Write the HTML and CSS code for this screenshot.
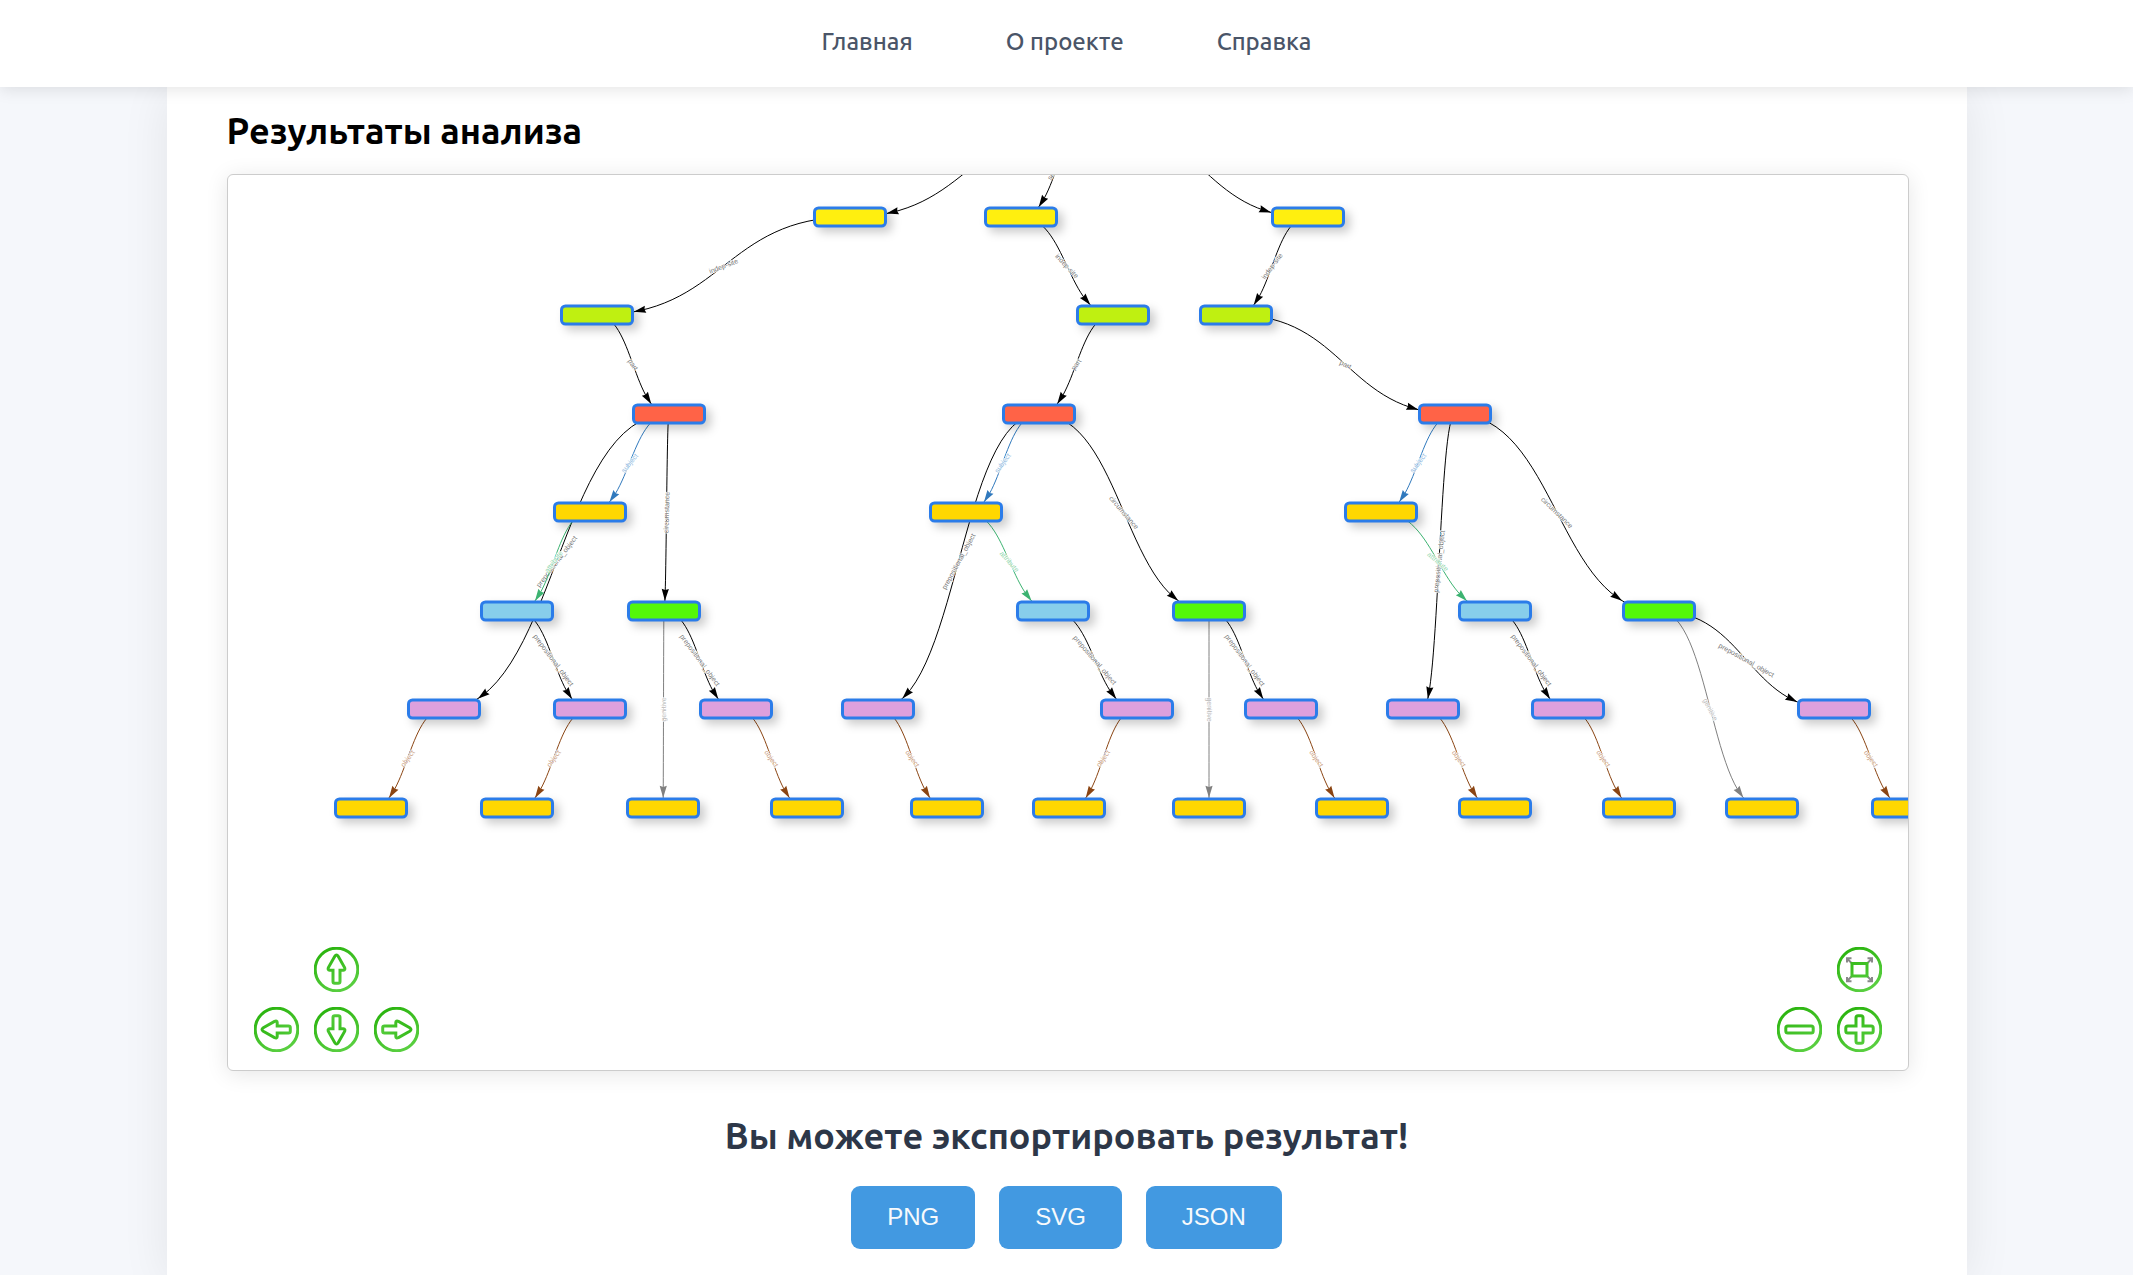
FILE: index.html
```html
<!DOCTYPE html>
<html lang="ru">
<head>
<meta charset="utf-8">
<title>Результаты анализа</title>
<link rel="stylesheet" href="styles.css">
</head>
<body>
<header class="header">
  <nav class="nav">
    <a class="nav-link" href="#">Главная</a>
    <a class="nav-link" href="#">О проекте</a>
    <a class="nav-link" href="#">Справка</a>
  </nav>
</header>
<main class="container">
  <h2 class="title">Результаты анализа</h2>
  <div class="network">
    <svg class="network-canvas" id="network" role="img" aria-label="Граф разбора"></svg>
    <svg class="defs" aria-hidden="true">
      <defs>
        <linearGradient id="green" gradientUnits="userSpaceOnUse" x1="8" y1="0" x2="30" y2="45">
          <stop offset="0" stop-color="#27b20b"/><stop offset="1" stop-color="#5bd042"/>
        </linearGradient>
        <symbol id="arrow" viewBox="0 0 45 45">
          <path d="M20.8 9.300 Q22.500 6.700 24.200 9.300 L30.600 20.500 Q31.500 23.200 29.500 23.200 H26 V34.500 Q26 36.300 24.200 36.300 H20.800 Q19 36.300 19 34.500 V23.200 H15.500 Q13.500 23.200 14.400 20.500Z"/>
        </symbol>
      </defs>
    </svg>
    <div class="controls controls-move">
      <button class="control control-up" aria-label="Вверх"><svg class="icon" viewBox="0 0 45 45"><circle cx="22.500" cy="22.500" r="21.300"/><use href="#arrow" width="45" height="45"/></svg></button>
      <button class="control control-left" aria-label="Влево"><svg class="icon" viewBox="0 0 45 45"><circle cx="22.500" cy="22.500" r="21.300"/><use href="#arrow" width="45" height="45" transform="rotate(-90 22.500 22.500)"/></svg></button>
      <button class="control control-down" aria-label="Вниз"><svg class="icon" viewBox="0 0 45 45"><circle cx="22.500" cy="22.500" r="21.300"/><use href="#arrow" width="45" height="45" transform="rotate(180 22.500 22.500)"/></svg></button>
      <button class="control control-right" aria-label="Вправо"><svg class="icon" viewBox="0 0 45 45"><circle cx="22.500" cy="22.500" r="21.300"/><use href="#arrow" width="45" height="45" transform="rotate(90 22.500 22.500)"/></svg></button>
    </div>
    <div class="controls controls-zoom">
      <button class="control control-fit" aria-label="Показать всё"><svg class="icon" viewBox="0 0 45 45"><circle cx="22.500" cy="22.500" r="21.300"/><path class="icon-gray" d="M14.500 16 10 11.500M10 15.500V11.200H14.500M30.500 16 35 11.500M30.500 11.200H35V15.500M14.500 29.500 10 34M10 30V34.300H14.500M30.500 29.500 35 34M30.500 34.300H35V30"/><path class="icon-frame" d="M15 16.500H30V29H15Z"/></svg></button>
      <button class="control control-out" aria-label="Уменьшить"><svg class="icon" viewBox="0 0 45 45"><circle cx="22.500" cy="22.500" r="21.300"/><rect x="8.800" y="19" width="27.400" height="7" rx="2"/></svg></button>
      <button class="control control-in" aria-label="Увеличить"><svg class="icon" viewBox="0 0 45 45"><circle cx="22.500" cy="22.500" r="21.300"/><path d="M19 19V10.800Q19 8.800 21 8.800H24Q26 8.800 26 10.800V19H34.200Q36.200 19 36.200 21V24Q36.200 26 34.200 26H26V34.200Q26 36.200 24 36.200H21Q19 36.200 19 34.200V26H10.800Q8.800 26 8.800 24V21Q8.800 19 10.800 19Z"/></svg></button>
    </div>
  </div>
  <section class="export">
    <h2 class="export-title">Вы можете экспортировать результат!</h2>
    <div class="export-buttons">
      <button class="button">PNG</button>
      <button class="button">SVG</button>
      <button class="button">JSON</button>
    </div>
  </section>
</main>
<script src="network.js"></script>
</body>
</html>
```
FILE: styles.css
```css
body {
  margin: 0;
  background: #f5f7fb;
  font-family: Ubuntu, "Noto Sans", sans-serif;
  color: #000;
}

.header {
  position: sticky;
  top: 0;
  z-index: 2;
  height: 87px;
  box-sizing: border-box;
  padding-bottom: 3px;
  display: flex;
  align-items: center;
  justify-content: center;
  background: #fff;
  box-shadow: 0 3px 15px rgba(0, 0, 0, 0.1);
}

.nav {
  display: flex;
  gap: 93px;
}

.nav-link {
  font-size: 24px;
  font-weight: 500;
  line-height: 32px;
  color: #4a5568;
  text-decoration: none;
}

.container {
  max-width: 1682px;
  margin: 0 auto;
  padding: 20px 58px 26px 60px;
  background: #fff;
  box-shadow: 0 6px 45px rgba(0, 0, 0, 0.08);
}

.title {
  margin: 0 0 19px;
  font-size: 36px;
  font-weight: 600;
  line-height: 48px;
}

.network {
  position: relative;
  height: 895px;
  border: 1px solid #ccc;
  border-radius: 6px;
  overflow: hidden;
  background: #fff;
  box-shadow: 0 3px 22px rgba(0, 0, 0, 0.1);
}

.network-canvas {
  display: block;
  width: 100%;
  height: 100%;
}

.defs {
  position: absolute;
  width: 0;
  height: 0;
}

.node {
  stroke: #2b7ce9;
  stroke-width: 3px;
  filter: drop-shadow(5px 5px 5px rgba(0, 0, 0, 0.2));
}

.edge {
  fill: none;
  stroke-width: 1px;
}

.edge-label {
  font-family: Arial, "Liberation Sans", sans-serif;
  font-size: 7px;
  text-anchor: middle;
  dominant-baseline: central;
  stroke: #fff;
  stroke-width: 1px;
  paint-order: stroke;
}

.controls {
  position: absolute;
  bottom: 18px;
  display: grid;
  gap: 15px;
}

.controls-move {
  left: 26px;
  grid-template-areas: ". up ." "left down right";
}

.controls-zoom {
  right: 26px;
  grid-template-areas: ". fit" "out in";
}

.control {
  width: 45px;
  height: 45px;
  padding: 0;
  border: 0;
  background: none;
  cursor: pointer;
}

.control-up { grid-area: up; }
.control-left { grid-area: left; }
.control-down { grid-area: down; }
.control-right { grid-area: right; }
.control-fit { grid-area: fit; }
.control-out { grid-area: out; }
.control-in { grid-area: in; }

.icon {
  display: block;
  width: 45px;
  height: 45px;
  fill: none;
  stroke: url(#green);
  stroke-width: 3px;
}

.icon-gray {
  stroke: #888;
  stroke-width: 2px;
}

.icon-frame {
  stroke-width: 3px;
}

.export {
  display: flex;
  flex-direction: column;
  align-items: center;
  gap: 26px;
  padding: 41px 2px 0 0;
}

.export-title {
  margin: 0;
  font-size: 36px;
  font-weight: 600;
  line-height: 48px;
  color: #2d3748;
}

.export-buttons {
  display: flex;
  gap: 24px;
}

.button {
  padding: 0 36px 1px;
  border: 0;
  border-radius: 9px;
  background: #4299e1;
  color: #f7fafc;
  font-family: Arial, "Liberation Sans", sans-serif;
  font-size: 24px;
  line-height: 62px;
  cursor: pointer;
}
```
FILE: network.js
```js
// Syntax graph: nodes sit on fixed levels, edges are horizontal cubic curves.
const SVG = "http://www.w3.org/2000/svg";
const canvas = document.getElementById("network");
const levels = [-57, 42, 140, 239, 337, 436, 534, 633];
const nodeSize = { w: 71, h: 18 };

const types = {
  root: "#ffef0f", sentence: "#ffef0f", clause: "#bff011", verb: "#ff6347",
  noun: "#ffd700", adjective: "#87ceeb", adverb: "#54f70a", prep: "#dda0dd"
};

// id: [x, level, type]
const nodes = {
  r: [865, 0, "root"],
  s1: [622, 1, "sentence"], s2: [793, 1, "sentence"], s3: [1080, 1, "sentence"],
  c1: [369, 2, "clause"], c2: [885, 2, "clause"], c3: [1008, 2, "clause"],
  v1: [441, 3, "verb"], v2: [811, 3, "verb"], v3: [1227, 3, "verb"],
  n1: [362, 4, "noun"], n2: [738, 4, "noun"], n3: [1153, 4, "noun"],
  a1: [289, 5, "adjective"], d1: [436, 5, "adverb"], a2: [825, 5, "adjective"],
  d2: [981, 5, "adverb"], a3: [1267, 5, "adjective"], d3: [1431, 5, "adverb"],
  p1: [216, 6, "prep"], p2: [362, 6, "prep"], p3: [508, 6, "prep"],
  p4: [650, 6, "prep"], p5: [909, 6, "prep"], p6: [1053, 6, "prep"],
  p7: [1195, 6, "prep"], p8: [1340, 6, "prep"], p9: [1606, 6, "prep"],
  o1: [143, 7, "noun"], o2: [289, 7, "noun"], o3: [435, 7, "noun"], o4: [579, 7, "noun"],
  o5: [719, 7, "noun"], o6: [841, 7, "noun"], o7: [981, 7, "noun"], o8: [1124, 7, "noun"],
  o9: [1267, 7, "noun"], o10: [1411, 7, "noun"], o11: [1534, 7, "noun"], o12: [1680, 7, "noun"]
};

const relations = {
  "": ["#000", "#777"], sentence: ["#000", "#777"], "indep-site": ["#000", "#777"], part: ["#000", "#777"],
  circumstance: ["#000", "#777"], prepositional_object: ["#000", "#777"],
  subject: ["#3079bd", "#8db8e0"], attribute: ["#3cb371", "#8fd6ad"],
  object: ["#8b4513", "#c99d80"], genitive: ["#808080", "#bbb"]
};

const edges = [
  ["r", "s1", ""], ["r", "s2", "sentence"], ["r", "s3", ""],
  ["s1", "c1", "indep-site"], ["s2", "c2", "indep-site"], ["s3", "c3", "indep-site"],
  ["c1", "v1", "part"], ["c2", "v2", "part"], ["c3", "v3", "part"],
  ["v1", "p1", "prepositional_object"], ["v2", "p4", "prepositional_object"], ["v3", "p7", "prepositional_object"],
  ["v1", "n1", "subject"], ["v2", "n2", "subject"], ["v3", "n3", "subject"],
  ["v1", "d1", "circumstance"], ["v2", "d2", "circumstance"], ["v3", "d3", "circumstance"],
  ["n1", "a1", "attribute"], ["n2", "a2", "attribute"], ["n3", "a3", "attribute"],
  ["a1", "p2", "prepositional_object"], ["a2", "p5", "prepositional_object"], ["a3", "p8", "prepositional_object"],
  ["d1", "p3", "prepositional_object"], ["d2", "p6", "prepositional_object"], ["d3", "p9", "prepositional_object"],
  ["d1", "o3", "genitive"], ["d2", "o7", "genitive"], ["d3", "o11", "genitive"],
  ["p1", "o1", "object"], ["p2", "o2", "object"], ["p3", "o4", "object"],
  ["p4", "o5", "object"], ["p5", "o6", "object"], ["p6", "o8", "object"],
  ["p7", "o9", "object"], ["p8", "o10", "object"], ["p9", "o12", "object"]
];

function add(name, attributes, text) {
  const el = document.createElementNS(SVG, name);
  for (const key in attributes) el.setAttribute(key, attributes[key]);
  if (text) el.textContent = text;
  canvas.append(el);
}

function pointAt(a, b, t) {
  return {
    x: a.x + (b.x - a.x) * (1.5 * t * (1 - t) + t * t * t),
    y: a.y + (b.y - a.y) * (3 * t * t - 2 * t * t * t)
  };
}

function drawEdge([from, to, label]) {
  const a = { x: nodes[from][0], y: levels[nodes[from][1]] };
  const b = { x: nodes[to][0], y: levels[nodes[to][1]] };
  const [color, textColor] = relations[label];
  const mid = (a.x + b.x) / 2;

  // Arrow tip: where the curve meets the border of the target node.
  let t = 1;
  let tip = b;
  while (Math.abs(tip.x - b.x) < nodeSize.w / 2 + 1 && Math.abs(tip.y - b.y) < nodeSize.h / 2 + 1) {
    t -= 0.002;
    tip = pointAt(a, b, t);
  }
  let tail = tip;
  while (Math.hypot(tail.x - tip.x, tail.y - tip.y) < 11) {
    t -= 0.002;
    tail = pointAt(a, b, t);
  }
  const turn = Math.atan2(tip.y - tail.y, tip.x - tail.x) * 180 / Math.PI;

  add("path", { class: "edge", stroke: color, d: `M${a.x} ${a.y}C${mid} ${a.y} ${mid} ${b.y} ${b.x} ${b.y}` });
  add("path", { fill: color, d: "M0 0L-12 3.6L-10.8 0L-12 -3.6Z", transform: `translate(${tip.x} ${tip.y}) rotate(${turn})` });

  if (!label) return;
  let angle = Math.atan2(b.y - a.y, b.x - a.x) * 180 / Math.PI;
  if (b.x < a.x) angle += 180;
  add("text", { class: "edge-label", fill: textColor, transform: `translate(${mid} ${(a.y + b.y) / 2}) rotate(${angle})` }, label);
}

function drawNode([x, level, type]) {
  add("rect", {
    class: "node", fill: types[type], rx: 4,
    x: x - nodeSize.w / 2, y: levels[level] - nodeSize.h / 2,
    width: nodeSize.w, height: nodeSize.h
  });
}

edges.forEach(drawEdge);
Object.values(nodes).forEach(drawNode);
```
